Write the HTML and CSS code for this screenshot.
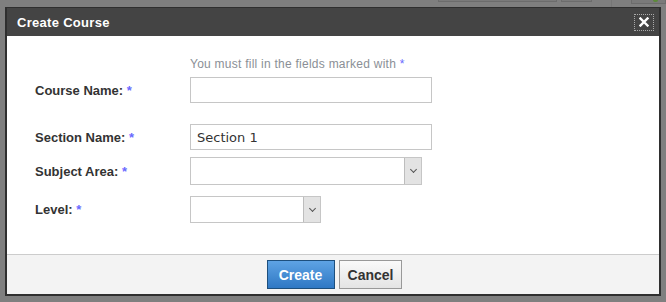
FILE: index.html
```html
<!DOCTYPE html>
<html lang="en">
<head>
  <meta charset="UTF-8">
  <title>Create Course</title>
  <link rel="stylesheet" href="styles.css">
</head>
<body>
  <div class="backdrop">
    <span class="bg-btn wide"></span>
    <span class="bg-btn narrow"></span>
    <span class="bg-sep"></span>
    <span class="bg-btn tab"><i class="dot"></i></span>
  </div>

  <div class="dialog">
    <div class="dialog-title">
      <span>Create Course</span>
      <button class="close" type="button" aria-label="Close">
        <svg width="10" height="10" viewBox="0 0 10 10"><path d="M1.5 1.5 L8.5 8.5 M8.5 1.5 L1.5 8.5" stroke="#fff" stroke-width="2.4" stroke-linecap="square"/></svg>
      </button>
    </div>

    <div class="dialog-body">
      <p class="hint">You must fill in the fields marked with <span class="req">*</span></p>

      <div class="row row-course">
        <label>Course Name: <span class="req">*</span></label>
        <input type="text" class="field">
      </div>

      <div class="row row-section">
        <label>Section Name: <span class="req">*</span></label>
        <input type="text" class="field" value="Section 1">
      </div>

      <div class="row row-subject">
        <label>Subject Area: <span class="req">*</span></label>
        <div class="select subject"><span class="arrow"></span></div>
      </div>

      <div class="row row-level">
        <label>Level: <span class="req">*</span></label>
        <div class="select level"><span class="arrow"></span></div>
      </div>
    </div>

    <div class="dialog-footer">
      <button class="btn btn-primary" type="button">Create</button>
      <button class="btn" type="button">Cancel</button>
    </div>
  </div>
</body>
</html>
```

FILE: styles.css
```css
html, body {
  margin: 0;
  height: 100%;
  overflow: hidden;
}
body {
  background: #7f7f7f;
  font-family: "Liberation Sans", Arial, sans-serif;
  font-size: 12px;
  color: #333;
}
.backdrop {
  height: 7px;
  display: flex;
  align-items: flex-start;
}
.bg-btn {
  display: block;
  height: 1px;
  border: 1px solid #6c6c6c;
  border-top: none;
  background: #7a7a7a;
}
.bg-btn.wide {
  width: 118px;
  margin-left: 438px;
}
.bg-btn.narrow {
  width: 30px;
  margin-left: 4px;
}
.bg-sep {
  width: 1px;
  height: 7px;
  background: #767676;
  margin-left: 19px;
}
.bg-btn.tab {
  width: 33px;
  height: 3px;
  margin-left: 19px;
  position: relative;
}
.dot {
  position: absolute;
  right: 7px;
  top: 0;
  width: 5px;
  height: 2px;
  border-radius: 0 0 3px 3px;
  background: #5d8a3a;
}
.dialog {
  width: 652px;
  margin-left: 5px;
  border: 2px solid #2f2f2f;
  border-top: 1px solid #2f2f2f;
  background: #fff;
}
.dialog-title {
  height: 28px;
  background: #444;
  display: flex;
  align-items: center;
  justify-content: space-between;
  padding: 0 5px 0 10px;
  color: #fff;
  font-weight: bold;
  font-size: 13px;
  letter-spacing: 0.3px;
}
.close {
  width: 20px;
  height: 17px;
  padding: 0;
  border: 1px dotted #aaa;
  background: transparent;
  display: flex;
  align-items: center;
  justify-content: center;
  cursor: pointer;
}
.dialog-body {
  height: 219px;
  padding: 21px 0 0 28px;
  box-sizing: border-box;
  border-bottom: 1px solid #ccc;
}
.hint {
  margin: 0 0 6px 155px;
  color: #8a8f96;
  line-height: 14px;
  letter-spacing: 0.25px;
}
.req {
  color: #6a6aff;
}
.row {
  display: grid;
  grid-template-columns: 155px auto;
  align-items: center;
}
.row label {
  font-weight: bold;
  font-size: 13px;
}
.row-section {
  margin-top: 21px;
}
.row-subject {
  margin-top: 7px;
}
.row-level {
  margin-top: 11px;
}
.field {
  width: 242px;
  height: 26px;
  box-sizing: border-box;
  margin: 0;
  border: 1px solid #c6c6c6;
  padding: 0 6px;
  font-family: "DejaVu Sans", sans-serif;
  font-size: 13px;
  color: #333;
}
.select {
  height: 28px;
  box-sizing: border-box;
  border: 1px solid #c6c6c6;
  display: flex;
  justify-content: flex-end;
}
.select.subject {
  width: 232px;
}
.select.level {
  width: 131px;
  height: 27px;
}
.arrow {
  width: 16px;
  background: #e3e3e3;
  border-left: 1px solid #bdbdbd;
  position: relative;
}
.arrow::after {
  content: "";
  position: absolute;
  left: 6px;
  top: 50%;
  width: 4px;
  height: 4px;
  margin-top: -4px;
  border-right: 1px solid #555;
  border-bottom: 1px solid #555;
  transform: rotate(45deg);
}
.dialog-footer {
  height: 39px;
  background: #f3f3f3;
  display: flex;
  justify-content: center;
  align-items: center;
  gap: 4px;
  padding-left: 3px;
}
.btn {
  height: 29px;
  padding: 0 8px;
  font-family: "Liberation Sans", Arial, sans-serif;
  font-size: 14px;
  font-weight: bold;
  color: #333;
  border: 1px solid #999;
  background: linear-gradient(#fafafa, #e4e4e4);
}
.btn-primary {
  width: 68px;
  color: #fff;
  border-color: #1d4f7d;
  background: linear-gradient(#5ea3e4, #2f78c4);
}
```
